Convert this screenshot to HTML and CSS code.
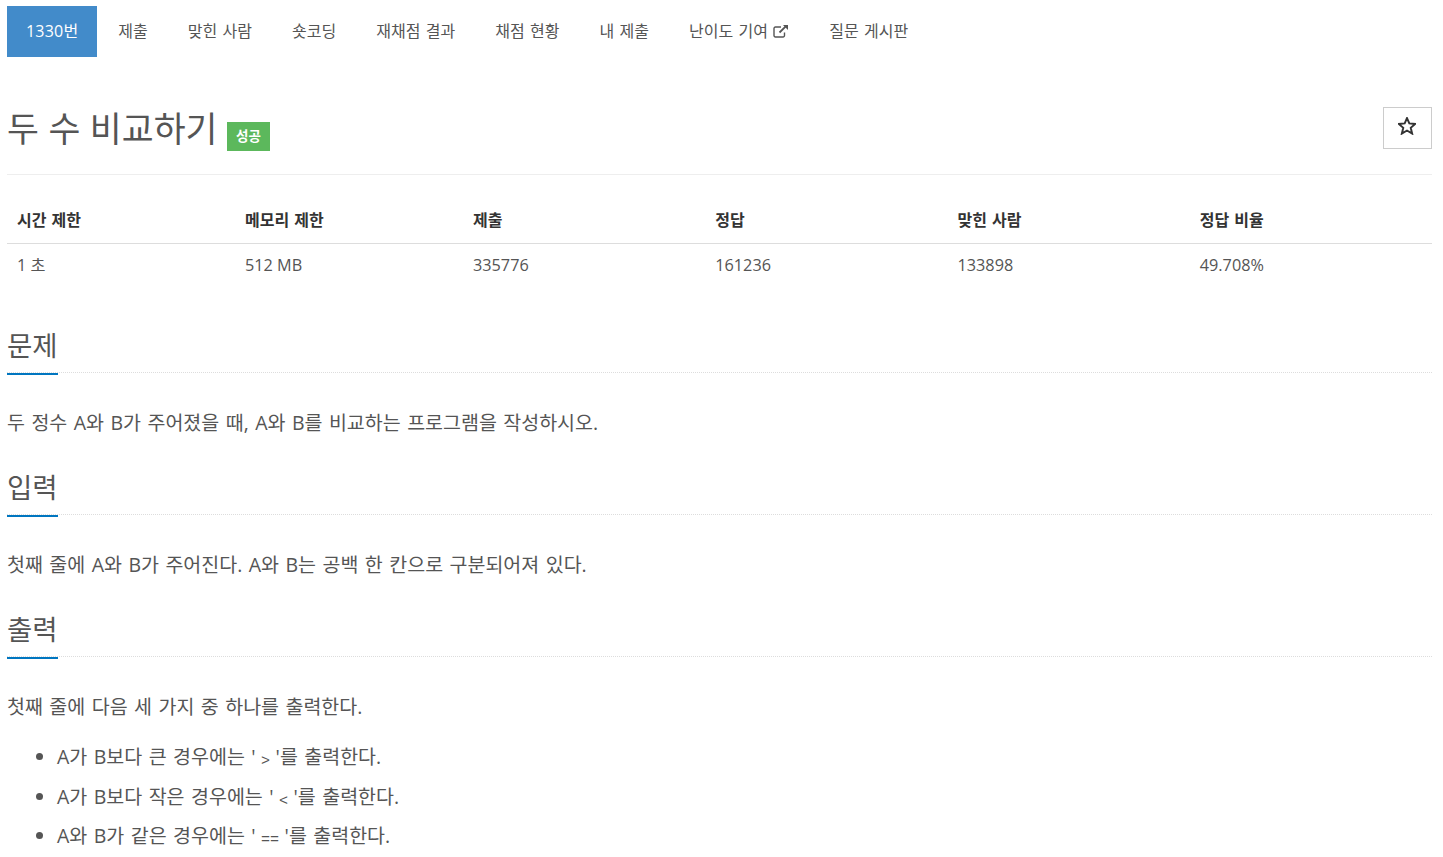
FILE: index.html
```html
<!DOCTYPE html>
<html lang="ko">
<head>
  <meta charset="UTF-8">
  <meta name="viewport" content="width=device-width, initial-scale=1.0">
  <title>두 수 비교하기</title>
  <link rel="stylesheet" href="styles.css">
</head>
<body>
  <ul class="problem-menu">
    <li class="active"><a href="#">1330번</a></li>
    <li><a href="#">제출</a></li>
    <li><a href="#">맞힌 사람</a></li>
    <li><a href="#">숏코딩</a></li>
    <li><a href="#">재채점 결과</a></li>
    <li><a href="#">채점 현황</a></li>
    <li><a href="#">내 제출</a></li>
    <li>
      <a href="#">난이도 기여
        <svg class="external-icon" viewBox="0 0 16 14" width="16" height="14" fill="none" stroke="currentColor" stroke-width="1.4">
          <path d="M11.5 8.5V11.6a1.4 1.4 0 0 1-1.4 1.4H2.4A1.4 1.4 0 0 1 1 11.6V4.4A1.4 1.4 0 0 1 2.4 3H8"/>
          <path d="M6.5 8.5L13.5 1.7" stroke-width="1.8"/>
          <path d="M10 1h5v5z" fill="currentColor" stroke="none"/>
        </svg>
      </a>
    </li>
    <li><a href="#">질문 게시판</a></li>
  </ul>

  <div class="page-header">
    <h1>두 수 비교하기 <span class="label-success">성공</span></h1>
    <button class="star-button" aria-label="즐겨찾기">
      <svg viewBox="1 1 14 14" width="18" height="18" fill="none" stroke="currentColor" stroke-width="1.5">
        <path d="M8 1.8l1.8 4.2 4.6.4-3.5 3 1.1 4.5L8 11.5l-4 2.4 1.1-4.5-3.5-3 4.6-.4z"/>
      </svg>
    </button>
  </div>

  <table class="problem-info">
    <thead>
      <tr>
        <th class="col-small">시간 제한</th>
        <th class="col-small">메모리 제한</th>
        <th>제출</th>
        <th>정답</th>
        <th>맞힌 사람</th>
        <th>정답 비율</th>
      </tr>
    </thead>
    <tbody>
      <tr>
        <td>1 초</td>
        <td>512 MB</td>
        <td>335776</td>
        <td>161236</td>
        <td>133898</td>
        <td>49.708%</td>
      </tr>
    </tbody>
  </table>

  <section class="problem-section">
    <div class="headline"><h2>문제</h2></div>
    <p>두 정수 A와 B가 주어졌을 때, A와 B를 비교하는 프로그램을 작성하시오.</p>
  </section>

  <section class="problem-section">
    <div class="headline"><h2>입력</h2></div>
    <p>첫째 줄에 A와 B가 주어진다. A와 B는 공백 한 칸으로 구분되어져 있다.</p>
  </section>

  <section class="problem-section">
    <div class="headline"><h2>출력</h2></div>
    <p>첫째 줄에 다음 세 가지 중 하나를 출력한다.</p>
    <ul class="output-list">
      <li>A가 B보다 큰 경우에는 '<code>&gt;</code>'를 출력한다.</li>
      <li>A가 B보다 작은 경우에는 '<code>&lt;</code>'를 출력한다.</li>
      <li>A와 B가 같은 경우에는 '<code>==</code>'를 출력한다.</li>
    </ul>
  </section>
</body>
</html>
```

FILE: styles.css
```css
body {
  font-family: "Open Sans", "Noto Sans CJK KR", sans-serif;
  font-size: 16px;
  color: #555;
  background-color: #fff;
  margin: 0;
  padding: 6px 11px 0 7px;
  height: 851px;
  overflow: hidden;
}

a {
  color: inherit;
  text-decoration: none;
}

.problem-menu {
  display: flex;
  list-style: none;
  margin: 0;
  padding: 0;
  height: 51px;
}

.problem-menu a {
  display: block;
  padding: 0 20px;
  line-height: 50px;
  font-size: 16px;
  word-spacing: 1.2px;
}

.problem-menu .active {
  margin-right: 1px;
}

.problem-menu .active a {
  background-color: #428bca;
  color: #fff;
  height: 51px;
  padding: 0 19px;
  letter-spacing: 0.2px;
}

.external-icon {
  vertical-align: -1px;
}

.page-header {
  display: flex;
  justify-content: space-between;
  align-items: flex-start;
  margin-top: 50px;
  height: 67px;
  border-bottom: 1px solid #eee;
}

h1 {
  font-size: 34.7px;
  font-weight: 400;
  line-height: 40px;
  margin: 2px 0 0;
  word-spacing: 0.5px;
}

.label-success {
  display: inline-block;
  background-color: #5cb85c;
  color: #fff;
  font-size: 13.5px;
  font-weight: 700;
  line-height: 29px;
  padding: 0 9px;
  vertical-align: 1px;
}

.star-button {
  width: 49px;
  height: 42px;
  padding: 0 2px 4px 0;
  display: flex;
  align-items: center;
  justify-content: center;
  background: #fff;
  border: 1px solid #ccc;
  color: #333;
}

.problem-info {
  width: 100%;
  table-layout: fixed;
  border-collapse: collapse;
  margin-top: 25px;
}

.problem-info th,
.problem-info td {
  box-sizing: border-box;
  text-align: left;
  padding: 10px;
  color: #555;
  font-size: 16.25px;
  line-height: 23px;
}

.problem-info th {
  color: #333;
  font-weight: 700;
  font-size: 16px;
  word-spacing: 1px;
  padding-top: 9px;
  padding-bottom: 11px;
  border-bottom: 1px solid #ddd;
}

.problem-info .col-small {
  width: 16%;
}

.headline {
  border-bottom: 1px dotted #ddd;
  height: 48px;
}

.problem-info + .problem-section {
  margin-top: 37px;
}

h2 {
  display: inline-block;
  margin: 0;
  height: 49px;
  font-size: 27.5px;
  font-weight: 400;
  line-height: 44px;
  border-bottom: 2px solid #0076c0;
}

.problem-section p {
  font-size: 19.5px;
  word-spacing: 1.4px;
  line-height: 26px;
  margin: 37px 0 0;
}

.problem-section + .problem-section {
  margin-top: 30px;
}

.output-list {
  font-size: 19.5px;
  word-spacing: 1.4px;
  margin: 24px 0 0;
  padding-left: 50px;
}

.output-list li {
  line-height: 26px;
  margin-bottom: 13.5px;
}

code {
  font-family: "Liberation Mono", monospace;
  font-size: 15px;
  line-height: 0;
  padding: 0 5.5px;
  vertical-align: -1px;
}
```
